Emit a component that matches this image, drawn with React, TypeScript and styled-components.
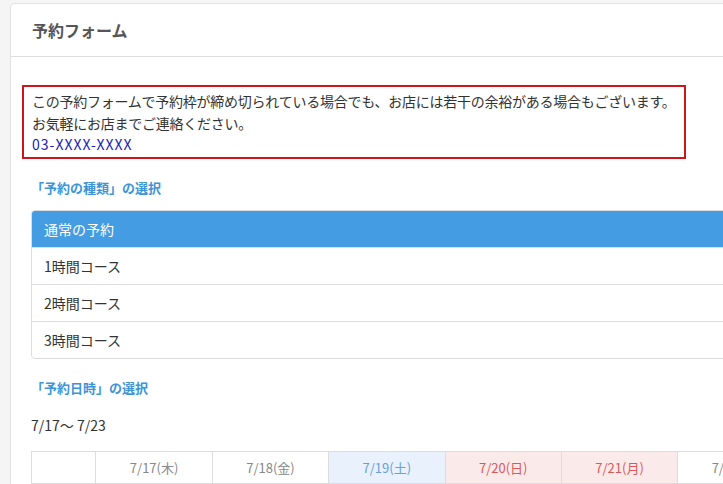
import React from "react";
import styled, { createGlobalStyle } from "styled-components";

const GlobalStyle = createGlobalStyle`
  body {
    margin: 0;
    background: #f5f5f5;
    font-family: "Noto Sans CJK JP", "Liberation Sans", sans-serif;
    color: #333;
    overflow: hidden;
  }
`;

type DayKind = "normal" | "sat" | "holiday";

const days: { label: string; kind: DayKind }[] = [
  { label: "7/17(木)", kind: "normal" },
  { label: "7/18(金)", kind: "normal" },
  { label: "7/19(土)", kind: "sat" },
  { label: "7/20(日)", kind: "holiday" },
  { label: "7/21(月)", kind: "holiday" },
  { label: "7/22(火)", kind: "normal" },
  { label: "7/23(水)", kind: "normal" },
];

const courses = ["通常の予約", "1時間コース", "2時間コース", "3時間コース"];

function App() {
  return (
    <>
      <GlobalStyle />
      <Page>
        <Panel>
          <PanelHeading>予約フォーム</PanelHeading>
          <PanelBody>
            <Notice>
              この予約フォームで予約枠が締め切られている場合でも、お店には若干の余裕がある場合もございます。
              <br />
              お気軽にお店までご連絡ください。
              <br />
              <Phone href="#">03-XXXX-XXXX</Phone>
            </Notice>

            <Section>
              <SectionTitle>「予約の種類」の選択</SectionTitle>
              <ListGroup>
                {courses.map((c, i) => (
                  <ListItem key={c} active={i === 0}>
                    {c}
                  </ListItem>
                ))}
              </ListGroup>
            </Section>

            <Section>
              <SectionTitle>「予約日時」の選択</SectionTitle>
              <Range>7/17～ 7/23</Range>
              <Calendar>
                <thead>
                  <tr>
                    <TimeHead />
                    {days.map((d) => (
                      <DayHead key={d.label} kind={d.kind}>
                        {d.label}
                      </DayHead>
                    ))}
                  </tr>
                </thead>
                <tbody>
                  <tr>
                    <Cell />
                    {days.map((d) => (
                      <Cell key={d.label} />
                    ))}
                  </tr>
                </tbody>
              </Calendar>
            </Section>
          </PanelBody>
        </Panel>
      </Page>
    </>
  );
}

export default App;

const Page = styled.div`
  padding: 3px 0 0 10px;
`;

const Panel = styled.div`
  width: 920px;
  background: #fff;
  border: 1px solid #e2e2e2;
  border-radius: 4px;
  min-height: 600px;
`;

const PanelHeading = styled.div`
  height: 52px;
  display: flex;
  align-items: center;
  padding: 0 21px;
  font-size: 16px;
  font-weight: bold;
  color: #555;
  border-bottom: 1px solid #dedede;
`;

const PanelBody = styled.div`
  padding: 28px 11px 0 11px;
`;

const Notice = styled.div`
  display: inline-block;
  border: 2px solid #d0141c;
  padding: 4px 8px 1px 8px;
  font-size: 14px;
  line-height: 21.5px;
  letter-spacing: -0.25px;
  color: #333;
`;

const Phone = styled.a`
  color: #1a1ab8;
  text-decoration: none;
  letter-spacing: 1px;
`;

const Section = styled.div`
  padding: 0 9px;
`;

const SectionTitle = styled.div`
  margin: 18px 0 11px;
  font-size: 13px;
  font-weight: bold;
  color: #3d95d6;
  line-height: 22px;
`;

const ListGroup = styled.div`
  border: 1px solid #dcdcdc;
  border-radius: 4px;
  overflow: hidden;
`;

const ListItem = styled.div<{ active?: boolean }>`
  height: 36px;
  display: flex;
  align-items: center;
  padding: 0 12px;
  font-size: 14px;
  color: ${(p) => (p.active ? "#fff" : "#333")};
  background: ${(p) => (p.active ? "#449ce3" : "#fff")};
  & + & {
    border-top: 1px solid #dedede;
  }
`;

const Range = styled.div`
  font-size: 14px;
  color: #333;
  margin: 15px 0 15px;
  line-height: 22px;
`;

const Calendar = styled.table`
  border-collapse: collapse;
  table-layout: fixed;
  font-size: 13px;
`;

const TimeHead = styled.th`
  width: 63px;
  height: 29px;
  border: 1px solid #dddddd;
  background: #fff;
`;

const DayHead = styled.th<{ kind: DayKind }>`
  width: 115px;
  height: 29px;
  border: 1px solid #dddddd;
  font-weight: normal;
  color: ${(p) =>
    p.kind === "sat" ? "#6a9fd9" : p.kind === "holiday" ? "#d65a5a" : "#888"};
  background: ${(p) =>
    p.kind === "sat" ? "#e9f1fc" : p.kind === "holiday" ? "#fbeaea" : "#fff"};
`;

const Cell = styled.td`
  height: 30px;
  border: 1px solid #dddddd;
`;
